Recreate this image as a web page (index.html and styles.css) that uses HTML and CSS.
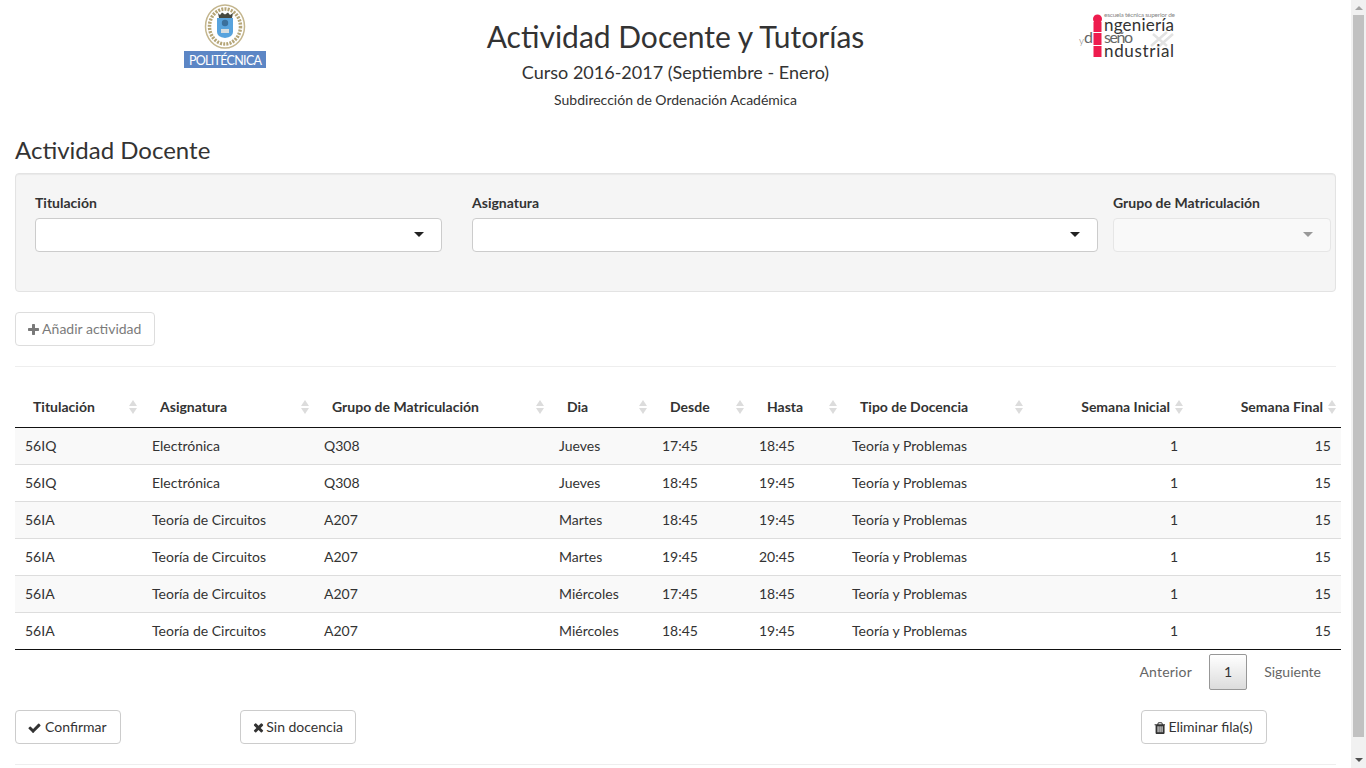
FILE: index.html
```html
<!DOCTYPE html>
<html lang="es">
<head>
    <meta charset="UTF-8">
    <meta name="viewport" content="width=device-width, initial-scale=1.0">
    <title>Actividad Docente y Tutorías</title>
    <link rel="stylesheet" href="styles.css">
</head>
<body>
<div class="app">
    <main class="page">
        <header class="top-header">
            <div class="logo-col">
                <svg class="logo-upm" width="82" height="68" viewBox="0 0 82 68">
                    <ellipse cx="41" cy="26.5" rx="19.5" ry="21.5" fill="#fff" stroke="#c4b68e" stroke-width="1.5"/>
                    <ellipse cx="41" cy="26.5" rx="15.5" ry="17.5" fill="none" stroke="#b5a577" stroke-width="3.5" stroke-dasharray="2 1.2"/>
                    <ellipse cx="41" cy="26.5" rx="12.5" ry="14.5" fill="#fff"/>
                    <path d="M34 13l2 2 2-2.500 3 2 3-2 2 2.500 3-2-1 5h-13z" fill="#45483f"/>
                    <path d="M33 18h16v14q0 5-8 6-8-1-8-6z" fill="#58a3dd"/>
                    <circle cx="41" cy="23" r="3.200" fill="#3a6f9c"/>
                    <rect x="37" y="29" width="8" height="4" fill="#d6dde0"/>
                    <rect y="51" width="82" height="17" fill="#5c86c5"/>
                    <text class="upm-text" x="5" y="65" textLength="73">POLITÉCNICA</text>
                </svg>
            </div>
            <div class="title-col">
                <h1>Actividad Docente y Tutorías</h1>
                <h2>Curso 2016-2017 (Septiembre - Enero)</h2>
                <p>Subdirección de Ordenación Académica</p>
            </div>
            <div class="logo-col">
                <svg class="logo-etsidi" width="100" height="50" viewBox="0 0 100 50">
                    <path d="M74 36l16-14M80 38l16-14M76 24l14 12" stroke="#e2e2e2" stroke-width="2.500" fill="none"/>
                    <circle cx="20.500" cy="9" r="4.500" fill="#ee1c4e"/>
                    <rect x="16.500" y="12" width="8" height="10" fill="#ee1c4e"/>
                    <rect x="16.500" y="23" width="8" height="12" fill="#ee1c4e"/>
                    <rect x="16.500" y="36" width="8" height="11" fill="#ee1c4e"/>
                    <text class="etsidi-small" x="27" y="7" textLength="71">escuela técnica superior de</text>
                    <text class="etsidi-big" x="27" y="21" textLength="70">ngeniería</text>
                    <text class="etsidi-y" x="2" y="34">y</text>
                    <text class="etsidi-mid" x="7" y="33">d</text>
                    <text class="etsidi-mid" x="27" y="33" textLength="29">seño</text>
                    <text class="etsidi-big" x="27" y="46.500" textLength="70">ndustrial</text>
                </svg>
            </div>
        </header>

        <h3 class="section-title">Actividad Docente</h3>

        <section class="filters">
            <div class="filter">
                <label>Titulación</label>
                <div class="select-box"><span class="caret"></span></div>
            </div>
            <div class="filter">
                <label>Asignatura</label>
                <div class="select-box"><span class="caret"></span></div>
            </div>
            <div class="filter">
                <label>Grupo de Matriculación</label>
                <div class="select-box disabled"><span class="caret"></span></div>
            </div>
        </section>

        <button class="btn btn-disabled btn-add">
            <svg class="icon icon-plus" viewBox="192 128 1408 1408"><path d="M1600 736v192q0 40-28 68t-68 28h-416v416q0 40-28 68t-68 28h-192q-40 0-68-28t-28-68v-416h-416q-40 0-68-28t-28-68v-192q0-40 28-68t68-28h416v-416q0-40 28-68t68-28h192q40 0 68 28t28 68v416h416q40 0 68 28t28 68z"/></svg>
            Añadir actividad
        </button>

        <hr class="rule rule-top">

        <table class="activity-table">
            <colgroup>
                <col class="c-tit"><col class="c-asi"><col class="c-gru"><col class="c-dia"><col class="c-des"><col class="c-has"><col class="c-tip"><col class="c-ini"><col class="c-fin">
            </colgroup>
            <thead>
                <tr>
                    <th>Titulación</th>
                    <th>Asignatura</th>
                    <th>Grupo de Matriculación</th>
                    <th>Dia</th>
                    <th>Desde</th>
                    <th>Hasta</th>
                    <th>Tipo de Docencia</th>
                    <th class="num">Semana Inicial</th>
                    <th class="num">Semana Final</th>
                </tr>
            </thead>
            <tbody>
                <tr><td>56IQ</td><td>Electrónica</td><td>Q308</td><td>Jueves</td><td>17:45</td><td>18:45</td><td>Teoría y Problemas</td><td class="num">1</td><td class="num">15</td></tr>
                <tr><td>56IQ</td><td>Electrónica</td><td>Q308</td><td>Jueves</td><td>18:45</td><td>19:45</td><td>Teoría y Problemas</td><td class="num">1</td><td class="num">15</td></tr>
                <tr><td>56IA</td><td>Teoría de Circuitos</td><td>A207</td><td>Martes</td><td>18:45</td><td>19:45</td><td>Teoría y Problemas</td><td class="num">1</td><td class="num">15</td></tr>
                <tr><td>56IA</td><td>Teoría de Circuitos</td><td>A207</td><td>Martes</td><td>19:45</td><td>20:45</td><td>Teoría y Problemas</td><td class="num">1</td><td class="num">15</td></tr>
                <tr><td>56IA</td><td>Teoría de Circuitos</td><td>A207</td><td>Miércoles</td><td>17:45</td><td>18:45</td><td>Teoría y Problemas</td><td class="num">1</td><td class="num">15</td></tr>
                <tr><td>56IA</td><td>Teoría de Circuitos</td><td>A207</td><td>Miércoles</td><td>18:45</td><td>19:45</td><td>Teoría y Problemas</td><td class="num">1</td><td class="num">15</td></tr>
            </tbody>
        </table>

        <nav class="pagination">
            <a class="page-btn page-prev">Anterior</a>
            <a class="page-btn current">1</a>
            <a class="page-btn">Siguiente</a>
        </nav>

        <div class="actions">
            <div class="action-cell">
                <button class="btn btn-confirm">
                    <svg class="icon icon-check" viewBox="64 128 1664 1664"><path d="M1671 566q0 40-28 68l-724 724-136 136q-28 28-68 28t-68-28l-136-136-362-362q-28-28-28-68t28-68l136-136q28-28 68-28t68 28l294 295 656-657q28-28 68-28t68 28l136 136q28 28 28 68z"/></svg>
                    Confirmar
                </button>
            </div>
            <div class="action-cell">
                <button class="btn">
                    <svg class="icon icon-times" viewBox="190 200 1408 1408"><path d="M1490 1322q0 40-28 68l-136 136q-28 28-68 28t-68-28l-294-294-294 294q-28 28-68 28t-68-28l-136-136q-28-28-28-68t28-68l294-294-294-294q-28-28-28-68t28-68l136-136q28-28 68-28t68 28l294 294 294-294q28-28 68-28t68 28l136 136q28 28 28 68t-28 68l-294 294 294 294q28 28 28 68z"/></svg>
                    Sin docencia
                </button>
            </div>
            <div class="action-cell action-last">
                <button class="btn btn-delete">
                    <svg class="icon icon-trash" viewBox="120 100 1408 1600"><path d="M704 1376v-704q0-14-9-23t-23-9h-64q-14 0-23 9t-9 23v704q0 14 9 23t23 9h64q14 0 23-9t9-23zm256 0v-704q0-14-9-23t-23-9h-64q-14 0-23 9t-9 23v704q0 14 9 23t23 9h64q14 0 23-9t9-23zm256 0v-704q0-14-9-23t-23-9h-64q-14 0-23 9t-9 23v704q0 14 9 23t23 9h64q14 0 23-9t9-23zm-544-992h448l-48-117q-7-9-17-11h-317q-10 2-17 11zm928 32v64q0 14-9 23t-23 9h-96v948q0 83-47 143.500t-113 60.500h-832q-66 0-113-58.500t-47-141.500v-952h-96q-14 0-23-9t-9-23v-64q0-14 9-23t23-9h309l70-167q15-37 54-63t79-26h320q40 0 79 26t54 63l70 167h309q14 0 23 9t9 23z"/></svg>
                    Eliminar fila(s)
                </button>
            </div>
        </div>

        <hr class="rule rule-bottom">
    </main>

    <div class="scrollbar">
        <span class="scroll-arrow up"></span>
        <div class="scroll-thumb"></div>
        <span class="scroll-arrow down"></span>
    </div>
</div>
</body>
</html>
```

FILE: styles.css
```css
html, body {
    margin: 0;
    height: 100%;
    overflow: hidden;
}

body {
    font-family: Lato, "Liberation Sans", sans-serif;
    font-size: 14px;
    line-height: 20px;
    color: #333;
    background-color: #fff;
}

.app {
    display: flex;
    height: 768px;
}

.page {
    width: 1351px;
    box-sizing: border-box;
    padding: 0 15px;
    overflow: hidden;
    flex: none;
}

/* cabecera */
.top-header {
    display: grid;
    grid-template-columns: repeat(3, 1fr);
    margin: 0 -15px;
    height: 127px;
}

.logo-col {
    text-align: center;
}

.logo-upm {
    display: inline-block;
}

.logo-etsidi {
    display: inline-block;
    margin-top: 10px;
    margin-left: 2px;
}

.upm-text {
    font-family: Lato, sans-serif;
    font-size: 12.5px;
    fill: #fff;
}

.etsidi-small {
    font-family: Lato, sans-serif;
    font-size: 6.5px;
    fill: #888;
}

.etsidi-big {
    font-family: Lato, sans-serif;
    font-size: 17px;
    fill: #333;
}

.etsidi-mid {
    font-family: Lato, sans-serif;
    font-size: 16px;
    fill: #666;
}

.etsidi-y {
    font-family: Lato, sans-serif;
    font-size: 10px;
    font-weight: 300;
    fill: #777;
}

.title-col {
    text-align: center;
}

.title-col h1 {
    font-size: 30px;
    font-weight: 400;
    line-height: 34px;
    margin: 19px 0 9px 0;
}

.title-col h2 {
    font-size: 18px;
    font-weight: 400;
    line-height: 20px;
    margin: 0 0 8px 0;
}

.title-col p {
    margin: 0;
}

.section-title {
    font-size: 24px;
    font-weight: 400;
    line-height: 26px;
    margin: 10px 0 10px 0;
}

/* filtros */
.filters {
    display: grid;
    grid-template-columns: 437px 641px 218px;
    height: 119px;
    box-sizing: border-box;
    padding: 19px;
    background-color: #f5f5f5;
    border: 1px solid #e3e3e3;
    border-radius: 4px;
    box-shadow: inset 0 1px 1px rgba(0, 0, 0, 0.05);
}

.filter label {
    display: block;
    font-weight: bold;
    margin-bottom: 5px;
}

.filter:nth-child(1) .select-box {
    margin-right: 30px;
}

.filter:nth-child(2) .select-box {
    margin-right: 15px;
}

.select-box {
    position: relative;
    height: 34px;
    box-sizing: border-box;
    background-color: #fff;
    border: 1px solid #ccc;
    border-radius: 4px;
}

.select-box .caret {
    position: absolute;
    top: 13px;
    right: 17px;
    width: 0;
    height: 0;
    border-left: 5px solid transparent;
    border-right: 5px solid transparent;
    border-top: 5px solid #222;
}

.select-box.disabled {
    background-color: #f9f9f9;
    border-color: #e6e6e6;
}

.select-box.disabled .caret {
    border-top-color: #999;
}

/* botones */
.btn {
    display: inline-block;
    height: 34px;
    box-sizing: border-box;
    padding: 6px 12px;
    font-family: inherit;
    font-size: 14px;
    line-height: 20px;
    color: #333;
    background-color: #fff;
    border: 1px solid #ccc;
    border-radius: 4px;
}

.btn-disabled {
    opacity: 0.65;
}

.btn-add {
    display: block;
    margin-top: 20px;
    padding-right: 13px;
}

.btn-confirm {
    padding-right: 13px;
}

.btn-delete {
    padding-right: 14px;
}

.icon {
    fill: currentColor;
}

.icon-plus {
    width: 11px;
    height: 11px;
    vertical-align: -1px;
}

.icon-check {
    width: 13px;
    height: 13px;
    vertical-align: -3px;
    margin-right: 0.500px;
}

.icon-times {
    width: 11px;
    height: 11px;
    vertical-align: -1px;
    margin-right: -1.500px;
}

.icon-trash {
    width: 11px;
    height: 12.500px;
    vertical-align: -2px;
}

.rule {
    border: 0;
    border-top: 1px solid #eee;
    margin: 0;
}

.rule-top {
    margin-top: 20px;
    margin-bottom: 20px;
}

.rule-bottom {
    margin-top: 20px;
}

/* tabla */
.activity-table {
    width: 1326px;
    table-layout: fixed;
    border-collapse: separate;
    border-spacing: 0;
}

.c-tit { width: 127px; }
.c-asi { width: 172px; }
.c-gru { width: 235px; }
.c-dia { width: 103px; }
.c-des { width: 97px; }
.c-has { width: 93px; }
.c-tip { width: 186px; }
.c-ini { width: 160px; }
.c-fin { width: 153px; }

.activity-table th {
    position: relative;
    padding: 10px 18px;
    font-weight: bold;
    text-align: left;
    border-bottom: 1px solid #111;
}

/* flechas de orden */
.activity-table th::before,
.activity-table th::after {
    content: "";
    position: absolute;
    right: 5px;
    width: 0;
    height: 0;
    border-left: 4.5px solid transparent;
    border-right: 4.5px solid transparent;
}

.activity-table th::before {
    top: 13px;
    border-bottom: 6px solid #dcdcdc;
}

.activity-table th::after {
    top: 21px;
    border-top: 6px solid #dcdcdc;
}

.activity-table td {
    padding: 8px 10px;
    border-top: 1px solid #ddd;
}

.activity-table tbody tr:first-child td {
    border-top: none;
}

.activity-table tbody tr:nth-child(odd) {
    background-color: #f9f9f9;
}

.activity-table tbody tr:last-child td {
    border-bottom: 1px solid #111;
}

.activity-table .num {
    text-align: right;
}

/* paginacion */
.pagination {
    display: flex;
    justify-content: flex-end;
    gap: 2px;
    margin-top: 4px;
}

.page-btn {
    padding: 7px 14px;
    border: 1px solid transparent;
    border-radius: 2px;
    color: #666;
}

.page-prev {
    letter-spacing: 0.2px;
}

.page-btn.current {
    color: #333;
    border-color: #979797;
    background: linear-gradient(to bottom, #fff 0%, #dcdcdc 100%);
}

/* acciones */
.actions {
    display: grid;
    grid-template-columns: repeat(6, 1fr);
    margin: 20px -15px 0 -15px;
}

.action-cell {
    padding-left: 15px;
}

.action-last {
    grid-column: 6;
    white-space: nowrap;
}

/* barra de scroll */
.scrollbar {
    position: relative;
    width: 15px;
    flex: none;
    background-color: #f1f1f1;
}

.scroll-thumb {
    position: absolute;
    top: 15px;
    left: 2px;
    width: 11px;
    height: 722px;
    background-color: #c1c1c1;
}

.scroll-arrow {
    position: absolute;
    left: 3.500px;
    width: 0;
    height: 0;
    border-left: 4px solid transparent;
    border-right: 4px solid transparent;
}

.scroll-arrow.up {
    top: 6px;
    border-bottom: 4px solid #a3a3a3;
}

.scroll-arrow.down {
    bottom: 6px;
    border-top: 4px solid #505050;
}
```
